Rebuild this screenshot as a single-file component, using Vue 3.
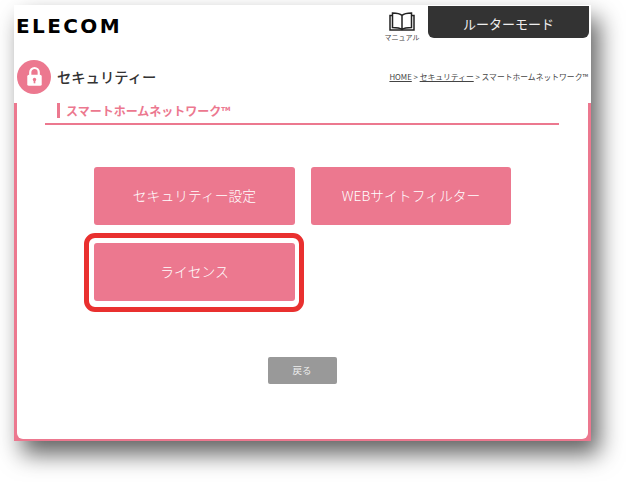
<template>
  <div class="page">
    <div class="frame">
      <header class="top">
        <div class="logo">ELECOM</div>
        <div class="manual">
          <svg class="book" width="26" height="19" viewBox="0 0 26 19" fill="none" stroke="#222" stroke-width="1.500">
            <path d="M13 3.500C11 1.600 7.500 1 3.500 1V15.500C7.500 15.500 11 16 13 17.500C15 16 18.500 15.500 22.500 15.500V1C18.500 1 15 1.600 13 3.500V17.500" />
            <path d="M3.500 3.500H1V18H25V3.500H22.500" />
          </svg>
          <span>マニュアル</span>
        </div>
        <div class="mode">ルーターモード</div>
      </header>

      <div class="title-row">
        <div class="lock">
          <svg width="20" height="24" viewBox="0 0 20 24">
            <path d="M5 11V7a5 5 0 0 1 10 0v4" fill="none" stroke="#fff" stroke-width="2.600" />
            <rect x="1.500" y="10" width="17" height="13" rx="2" fill="#fff" />
            <circle cx="10" cy="15.500" r="2" fill="#ec788f" />
            <rect x="9" y="15.500" width="2" height="4.500" fill="#ec788f" />
          </svg>
        </div>
        <h1>セキュリティー</h1>
        <div class="crumbs">
          <a>HOME</a> &gt; <a>セキュリティー</a> &gt; スマートホームネットワーク™
        </div>
      </div>

      <main class="card">
        <div class="card-inner">
          <h2><span>スマートホームネットワーク™</span></h2>
          <div class="menu">
            <button class="tile">セキュリティー設定</button>
            <button class="tile">WEBサイトフィルター</button>
            <button class="tile marked">ライセンス</button>
          </div>
          <div class="back-row">
            <button class="back">戻る</button>
          </div>
        </div>
      </main>
    </div>
  </div>
</template>

<script setup>
</script>

<style>
html,
body {
  margin: 0;
  background: #fff;
  overflow: hidden;
}
</style>

<style scoped>
.page {
  width: 626px;
  height: 482px;
  padding: 5px 0 0 14px;
  box-sizing: border-box;
  font-family: "Noto Sans CJK JP", "Liberation Sans", sans-serif;
}

.frame {
  width: 577px;
  height: 436px;
  background: #fff;
  box-shadow: 8px 13px 22px rgba(0, 0, 0, 0.62);
  display: flex;
  flex-direction: column;
}

.top {
  display: flex;
  height: 51px;
  flex-shrink: 0;
}

.logo {
  font-family: "DejaVu Sans", sans-serif;
  font-weight: 700;
  font-size: 20px;
  line-height: 20px;
  letter-spacing: 2.400px;
  color: #000;
  margin: 11px 0 0 2px;
}

.manual {
  margin: 7px 0 0 auto;
  width: 36px;
  display: flex;
  flex-direction: column;
  align-items: center;
  font-size: 7px;
  line-height: 9px;
  color: #444;
  white-space: nowrap;
}

.book {
  margin-bottom: 2px;
}

.mode {
  width: 161px;
  height: 32px;
  margin: 1px 2px 0 8px;
  background: #333;
  color: #eee;
  border-radius: 0 0 6px 6px;
  font-size: 13px;
  line-height: 35px;
  text-align: center;
}

.title-row {
  display: flex;
  align-items: center;
  height: 36px;
  padding: 5px 3px 0 3px;
  box-sizing: border-box;
  flex-shrink: 0;
}

.lock {
  width: 34px;
  height: 34px;
  border-radius: 50%;
  background: #ec788f;
  display: flex;
  align-items: center;
  justify-content: center;
  flex-shrink: 0;
}

.lock svg {
  width: 17px;
  height: 21px;
}

h1 {
  margin: 0 0 0 6px;
  font-size: 14.300px;
  font-weight: 500;
  color: #333;
  white-space: nowrap;
}

.crumbs {
  margin-left: auto;
  font-size: 7.800px;
  color: #444;
  white-space: nowrap;
}

.crumbs a {
  text-decoration: underline;
}

.card {
  flex: 1;
  display: flex;
  background: #ec788f;
  padding: 0 3px 2px;
  margin-top: 11px;
}

.card-inner {
  flex: 1;
  background: #fff;
  border-radius: 0 0 6px 6px;
  padding: 0 29px 0 28px;
  display: flex;
  flex-direction: column;
}

h2 {
  margin: 0;
  padding: 0 0 5px 12px;
  height: 15px;
  border-bottom: 2px solid #ec788f;
  box-sizing: content-box;
  font-size: 12px;
  line-height: 15px;
  font-weight: 700;
  color: #ec788f;
}

h2 span {
  display: block;
  border-left: 3px solid #ec788f;
  padding-left: 6px;
  height: 15px;
  white-space: nowrap;
}

.menu {
  display: grid;
  grid-template-columns: 201px 200px;
  grid-auto-rows: 58px;
  gap: 18px 16px;
  margin: 42px 0 0 49px;
}

.tile {
  position: relative;
  border: none;
  border-radius: 3px;
  background: #ec788f;
  color: #fff;
  font-family: inherit;
  font-size: 13.800px;
  font-weight: 300;
  padding: 0 0 3px;
}

.marked::after {
  content: "";
  position: absolute;
  inset: -10px -9px -11px -10px;
  border: 5px solid #e9302f;
  border-radius: 11px;
}

.back-row {
  display: flex;
  justify-content: center;
  margin-top: 56px;
}

.back {
  width: 69px;
  height: 27px;
  border: none;
  border-radius: 2px;
  background: #999;
  color: #eee;
  font-family: inherit;
  font-size: 9.500px;
  padding: 0 0 2px;
}
</style>
